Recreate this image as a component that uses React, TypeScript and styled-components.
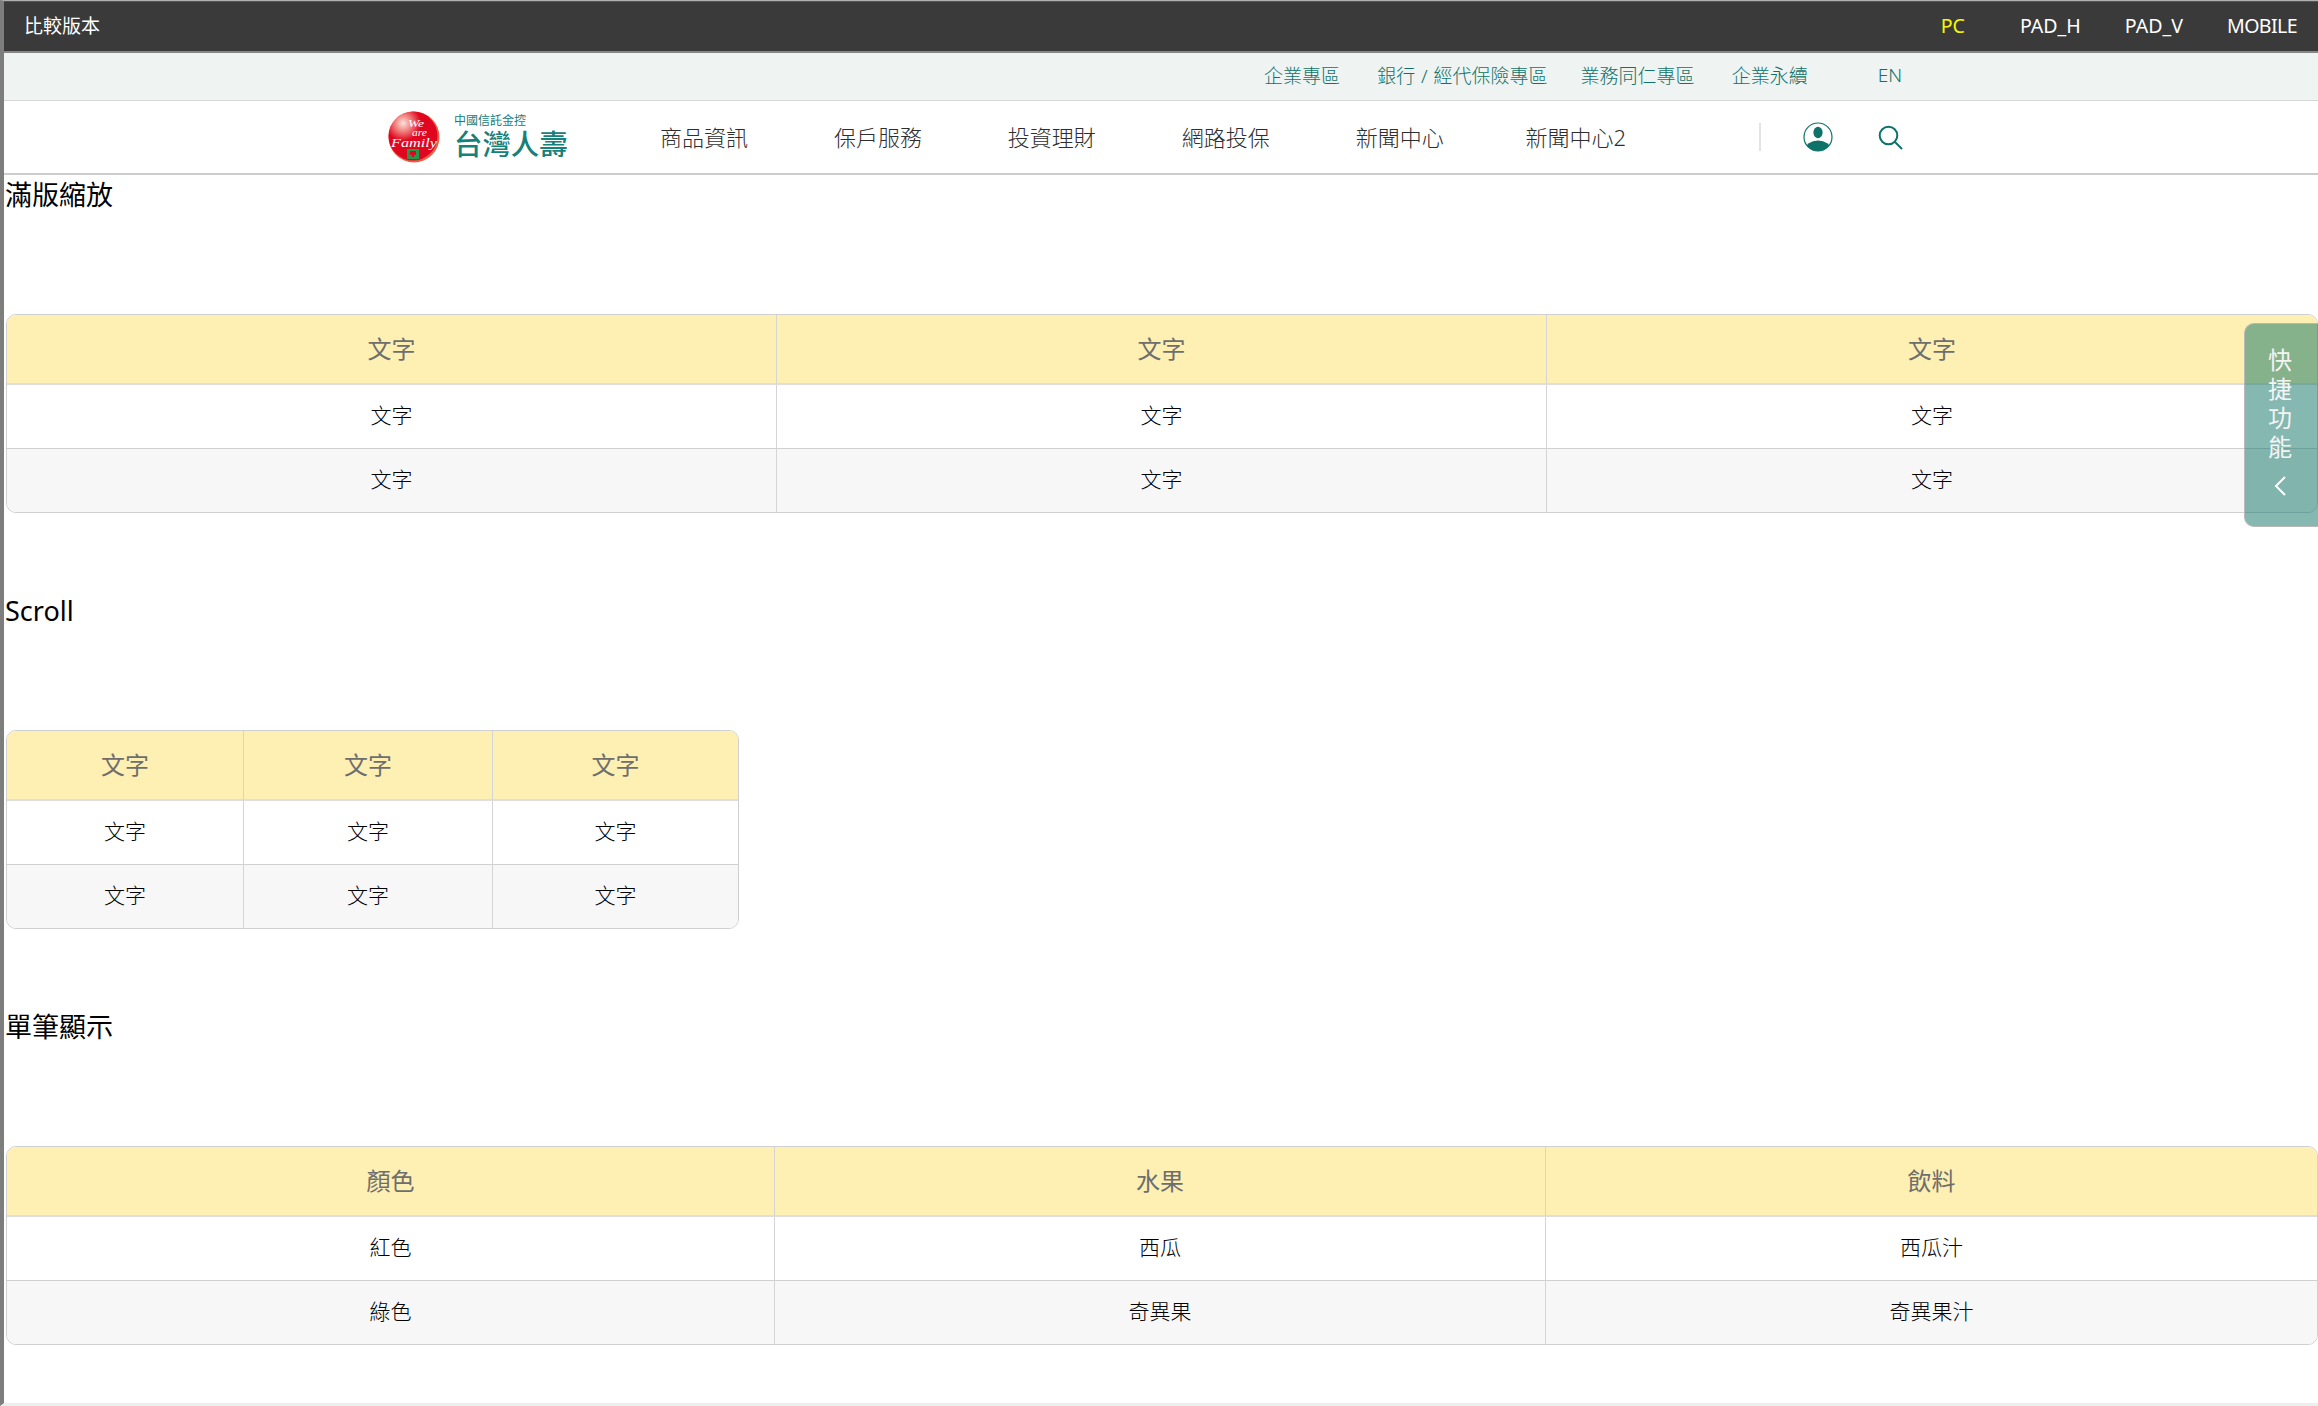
import React from 'react';
import styled, { createGlobalStyle } from 'styled-components';

const TEAL = '#0f7268';
const FONT = `"Noto Sans", "Noto Sans CJK TC", sans-serif`;

const sections = [
    {
        title: '滿版縮放',
        cols: [770, 770, 770],
        head: ['文字', '文字', '文字'],
        rows: [['文字', '文字', '文字'], ['文字', '文字', '文字']],
    },
    {
        title: 'Scroll',
        cols: [237, 249, 245],
        head: ['文字', '文字', '文字'],
        rows: [['文字', '文字', '文字'], ['文字', '文字', '文字']],
    },
    {
        title: '單筆顯示',
        cols: [768, 771, 771],
        head: ['顏色', '水果', '飲料'],
        rows: [['紅色', '西瓜', '西瓜汁'], ['綠色', '奇異果', '奇異果汁']],
    },
];

const subLinks = [
    { label: '企業專區', gap: 37 },
    { label: '銀行 / 經代保險專區', gap: 33 },
    { label: '業務同仁專區', gap: 37 },
    { label: '企業永續', gap: 70 },
    { label: 'EN', gap: 0 },
];

const navLinks = ['商品資訊', '保戶服務', '投資理財', '網路投保', '新聞中心', '新聞中心2'];

const UserIcon = () => (
    <svg width="30" height="30" viewBox="0 0 30 30">
        <defs>
            <clipPath id="user-clip">
                <circle cx="15" cy="15" r="14" />
            </clipPath>
        </defs>
        <circle cx="15" cy="15" r="14" fill="none" stroke={TEAL} strokeWidth="1.2" />
        <ellipse cx="15" cy="10.5" rx="4.6" ry="5.8" fill={TEAL} />
        <ellipse cx="15" cy="28" rx="13" ry="9.5" fill={TEAL} clipPath="url(#user-clip)" />
    </svg>
);

const SearchIcon = () => (
    <svg width="25" height="25" viewBox="0 0 25 25" fill="none" stroke={TEAL} strokeWidth="2">
        <circle cx="10.5" cy="10.5" r="8.8" />
        <path d="M17 17 L23.5 23.5" strokeLinecap="round" />
    </svg>
);

const LogoMark = () => (
    <svg width="52" height="52" viewBox="0 0 52 52">
        <defs>
            <radialGradient id="logo-shine" cx="0.3" cy="0.24" r="0.36">
                <stop offset="0" stopColor="#fbe2dc" />
                <stop offset="0.5" stopColor="#f07a78" />
                <stop offset="1" stopColor="#e0061f" />
            </radialGradient>
        </defs>
        <circle cx="26" cy="26" r="25.5" fill="#e8604a" />
        <circle cx="25" cy="25" r="24.5" fill="url(#logo-shine)" />
        <g fill="#fff" fontFamily='"Liberation Serif", serif' fontStyle="italic">
            <text x="20" y="16" fontSize="11" textLength="16" lengthAdjust="spacingAndGlyphs">We</text>
            <text x="24" y="25" fontSize="10" textLength="15" lengthAdjust="spacingAndGlyphs">are</text>
            <text x="3" y="36" fontSize="12" textLength="46" lengthAdjust="spacingAndGlyphs">Family</text>
        </g>
        <rect x="19" y="38" width="12" height="10" fill="#1f9a4a" />
        <rect x="22" y="40" width="6" height="4" fill="#e0061f" />
        <rect x="24" y="44" width="2" height="2" fill="#e0061f" />
    </svg>
);

const App = () => {
    return (
        <Page>
            <GlobalStyle />

            <TopBar>
                <TopLabel>比較版本</TopLabel>
                <DeviceList>
                    <DeviceItem $active $gap={55}>PC</DeviceItem>
                    <DeviceItem $gap={44}>PAD_H</DeviceItem>
                    <DeviceItem $gap={44}>PAD_V</DeviceItem>
                    <DeviceItem $gap={0}>MOBILE</DeviceItem>
                </DeviceList>
            </TopBar>

            <SubNav>
                {subLinks.map((link) => (
                    <SubLink key={link.label} $gap={link.gap}>{link.label}</SubLink>
                ))}
            </SubNav>

            <MainNav>
                <Logo>
                    <LogoMark />
                    <LogoText>
                        <LogoSmall>中國信託金控</LogoSmall>
                        <LogoBig>台灣人壽</LogoBig>
                    </LogoText>
                </Logo>
                <NavList>
                    {navLinks.map((link) => (
                        <NavItem key={link}>{link}</NavItem>
                    ))}
                </NavList>
                <Divider />
                <IconSlot $width={30}><UserIcon /></IconSlot>
                <IconSlot $width={25} $left={45}><SearchIcon /></IconSlot>
            </MainNav>

            <main>
                {sections.map((section) => (
                    <Section key={section.title}>
                        <Title>{section.title}</Title>
                        <Table $width={section.cols.reduce((a, b) => a + b, 0)}>
                            <colgroup>
                                {section.cols.map((w, i) => (
                                    <col key={i} width={w} />
                                ))}
                            </colgroup>
                            <thead>
                                <tr>
                                    {section.head.map((text, i) => (
                                        <Th key={i}>{text}</Th>
                                    ))}
                                </tr>
                            </thead>
                            <tbody>
                                {section.rows.map((row, r) => (
                                    <Tr key={r}>
                                        {row.map((text, i) => (
                                            <Td key={i}>{text}</Td>
                                        ))}
                                    </Tr>
                                ))}
                            </tbody>
                        </Table>
                    </Section>
                ))}
            </main>

            <QuickTab>
                <QuickText>快捷功能</QuickText>
                <svg width="14" height="22" viewBox="0 0 14 22" fill="none" stroke="#fff" strokeWidth="2">
                    <path d="M12 2 L3 11 L12 20" />
                </svg>
            </QuickTab>
        </Page>
    );
};

const GlobalStyle = createGlobalStyle`
    html, body {
        margin: 0;
        padding: 0;
        background: #fff;
    }
    body {
        font-family: ${FONT};
        overflow: hidden;
    }
`;

const Page = styled.div`
    position: relative;
    box-sizing: border-box;
    height: 1406px;
    overflow: hidden;
    border-top: 1px solid #b0b0b0;
    border-left: 4px solid #7d7d7d;
    border-bottom: 3px solid #eeeeee;
`;

const TopBar = styled.header`
    display: flex;
    align-items: center;
    justify-content: space-between;
    box-sizing: border-box;
    height: 52px;
    margin-left: -2px;
    padding: 0 21px 3px 22px;
    background: #3a3a3a;
    border-top: 1px solid #555;
    border-bottom: 2px solid #868686;
    color: #fff;
    font-size: 19px;
`;

const TopLabel = styled.span`
    font-weight: 400;
`;

const DeviceList = styled.div`
    display: flex;
    font-size: 19.6px;
`;

const DeviceItem = styled.span<{ $active?: boolean; $gap: number }>`
    margin-right: ${({ $gap }) => $gap}px;
    color: ${({ $active }) => ($active ? '#f7f700' : '#fff')};

    &:last-child {
        letter-spacing: -0.6px;
    }
`;

const SubNav = styled.nav`
    display: flex;
    align-items: center;
    justify-content: flex-end;
    box-sizing: border-box;
    height: 48px;
    padding: 0 416px 3px 0;
    background: #eff3f2;
    border-bottom: 1px solid #d5d5d5;
`;

const SubLink = styled.a<{ $gap: number }>`
    margin-right: ${({ $gap }) => $gap}px;
    color: ${TEAL};
    font-size: 19px;
    font-weight: 300;
    word-spacing: 1px;
`;

const MainNav = styled.nav`
    display: flex;
    align-items: center;
    box-sizing: border-box;
    height: 74px;
    padding-left: 384px;
    border-bottom: 2px solid #cccccc;
`;

const Logo = styled.div`
    display: flex;
    align-items: center;
    gap: 14px;
    width: 272px;
`;

const LogoText = styled.div`
    display: flex;
    flex-direction: column;
    color: #16807a;
`;

const LogoSmall = styled.span`
    font-size: 12px;
    line-height: 14px;
`;

const LogoBig = styled.span`
    font-size: 28.4px;
    line-height: 32px;
    font-weight: 500;
`;

const NavList = styled.div`
    display: flex;
    gap: 85.9px;
    width: 1099px;
    margin-bottom: 3px;
`;

const NavItem = styled.a`
    color: #2e2e2e;
    font-size: 22px;
    font-weight: 300;

    &:last-child {
        margin-left: -4px;
    }
`;

const Divider = styled.span`
    width: 2px;
    height: 28px;
    background: #e3e3e3;
    margin-right: 42px;
`;

const IconSlot = styled.span<{ $width: number; $left?: number }>`
    display: flex;
    width: ${({ $width }) => $width}px;
    margin-left: ${({ $left }) => $left || 0}px;
`;

const Section = styled.section`
    height: 416px;
`;

const Title = styled.h2`
    margin: 0 0 99px;
    height: 40px;
    color: #000;
    font-size: 27px;
    line-height: 40px;
    font-weight: 400;
    padding-left: 1px;
`;

const Table = styled.table<{ $width: number }>`
    width: ${({ $width }) => $width}px;
    margin-left: 2px;
    table-layout: fixed;
    border-collapse: separate;
    border-spacing: 0;
    border: 1px solid #d0d0d0;
    border-radius: 10px;
    overflow: hidden;
`;

const Th = styled.th`
    box-sizing: border-box;
    height: 70px;
    padding: 0 0 3px;
    background: #fef0b3;
    border-right: 1px solid #d5d5d5;
    border-bottom: 2px solid #dedede;
    color: #6e6e6e;
    font-size: 24px;
    font-weight: 400;

    &:last-child {
        border-right: 0;
    }
`;

const Tr = styled.tr`
    &:nth-child(even) td {
        height: 63px;
        background: #f7f7f7;
        border-bottom: 0;
    }
`;

const Td = styled.td`
    box-sizing: border-box;
    height: 64px;
    padding: 0 0 6px;
    text-align: center;
    background: #fff;
    border-right: 1px solid #d5d5d5;
    border-bottom: 1px solid #d0d0d0;
    color: #000;
    font-size: 21px;
    font-weight: 300;

    &:last-child {
        border-right: 0;
    }
`;

const QuickTab = styled.aside`
    position: absolute;
    top: 322px;
    right: 0;
    display: flex;
    flex-direction: column;
    align-items: center;
    box-sizing: border-box;
    width: 74px;
    height: 204px;
    padding: 21px 3px 0 0;
    gap: 14px;
    background: rgba(11, 113, 99, 0.5);
    border: 1px solid #b9b9b9;
    border-right: 0;
    border-radius: 10px 0 0 10px;
`;

const QuickText = styled.div`
    width: 24px;
    color: #f4f4f4;
    font-size: 24px;
    line-height: 29px;
    word-break: break-all;
    text-align: center;
`;

export default App;
